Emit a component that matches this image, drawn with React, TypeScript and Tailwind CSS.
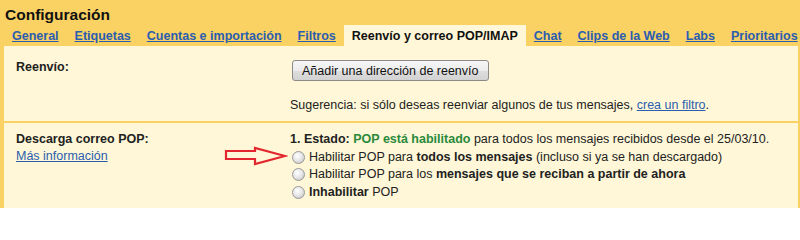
const tabs = [
  { label: "General" },
  { label: "Etiquetas" },
  { label: "Cuentas e importación" },
  { label: "Filtros" },
  { label: "Reenvío y correo POP/IMAP", active: true },
  { label: "Chat" },
  { label: "Clips de la Web" },
  { label: "Labs" },
  { label: "Prioritarios" },
];

function Radio() {
  return (
    <span className="inline-block w-[13px] h-[13px] ml-[2px] mr-[4px] rounded-full border border-[#9a9a9a] bg-[radial-gradient(circle_at_40%_35%,#ffffff_0%,#e2e2e2_55%,#b4b4b4_100%)] shrink-0" />
  );
}

function Arrow() {
  return (
    <svg
      className="absolute left-[224px] top-[146px]"
      width="64"
      height="20"
      viewBox="0 0 64 20"
    >
      <path
        d="M2 5 H31 V2 L61 10 L31 18 V13 H2 Z"
        fill="none"
        stroke="#e3262e"
        strokeWidth="2.2"
        strokeLinejoin="miter"
      />
    </svg>
  );
}

export default function App() {
  return (
    <div className="relative flex flex-col w-[800px] h-[208px] overflow-hidden bg-[#fad163] font-['Liberation_Sans',Arial,sans-serif] text-[#222]">
      <div className="pt-[6px] pl-[5px] h-[24px] shrink-0 text-[15.5px] leading-[18px] font-bold text-[#111] whitespace-nowrap">
        Configuración
      </div>

      <div className="flex mt-[1px] pl-[4px] h-[21px] shrink-0 whitespace-nowrap">
        {tabs.map((t) =>
          t.active ? (
            <span
              key={t.label}
              className="shrink-0 px-2 pt-[3px] text-[12.5px] leading-4 font-bold text-[#111] bg-[#fff7d7]"
            >
              {t.label}
            </span>
          ) : (
            <a
              key={t.label}
              href="#"
              className="shrink-0 px-2 pt-[3px] text-[12.5px] leading-4 font-bold text-[#2a5db0]"
            >
              <span className="underline">{t.label}</span>
            </a>
          )
        )}
      </div>

      <div className="flex-1 ml-[4px] mr-[2px] bg-[#fff7d7] text-[12.5px] whitespace-nowrap">
        <div className="grid grid-cols-[274px_1fr] pl-[12px] border-b-2 border-[#fad163]">
          <div className="pt-[13px] font-bold leading-4">Reenvío:</div>
          <div className="pt-[14px] pb-[8px]">
            <button className="h-[21px] ml-[2px] px-[9px] text-[12.5px] leading-4 text-[#111] border border-[#8a8a8a] rounded-[3px] bg-[linear-gradient(#f6f6f6,#ececec_50%,#dedede_51%,#d2d2d2)]">
              Añadir una dirección de reenvío
            </button>
            <div className="mt-[16px] leading-4">
              Sugerencia: si sólo deseas reenviar algunos de tus mensajes,{" "}
              <a href="#" className="underline text-[#2a5db0]">
                crea un filtro
              </a>
              .
            </div>
          </div>
        </div>

        <div className="grid grid-cols-[274px_1fr] pl-[12px]">
          <div className="pt-[8px] leading-[17px]">
            <div className="font-bold">Descarga correo POP:</div>
            <a href="#" className="underline text-[#2a5db0]">
              Más información
            </a>
          </div>
          <div className="pt-[8px] leading-[17.5px]">
            <div>
              <b>1. Estado:</b>{" "}
              <b className="text-[#2a8a3c]">POP está habilitado</b> para todos
              los mensajes recibidos desde el 25/03/10.
            </div>
            <div className="flex items-center">
              <Radio />
              <span>
                Habilitar POP para <b>todos los mensajes</b> (incluso si ya se
                han descargado)
              </span>
            </div>
            <div className="flex items-center">
              <Radio />
              <span>
                Habilitar POP para los{" "}
                <b>mensajes que se reciban a partir de ahora</b>
              </span>
            </div>
            <div className="flex items-center">
              <Radio />
              <span>
                <b>Inhabilitar</b> POP
              </span>
            </div>
          </div>
        </div>
      </div>

      <Arrow />
    </div>
  );
}
